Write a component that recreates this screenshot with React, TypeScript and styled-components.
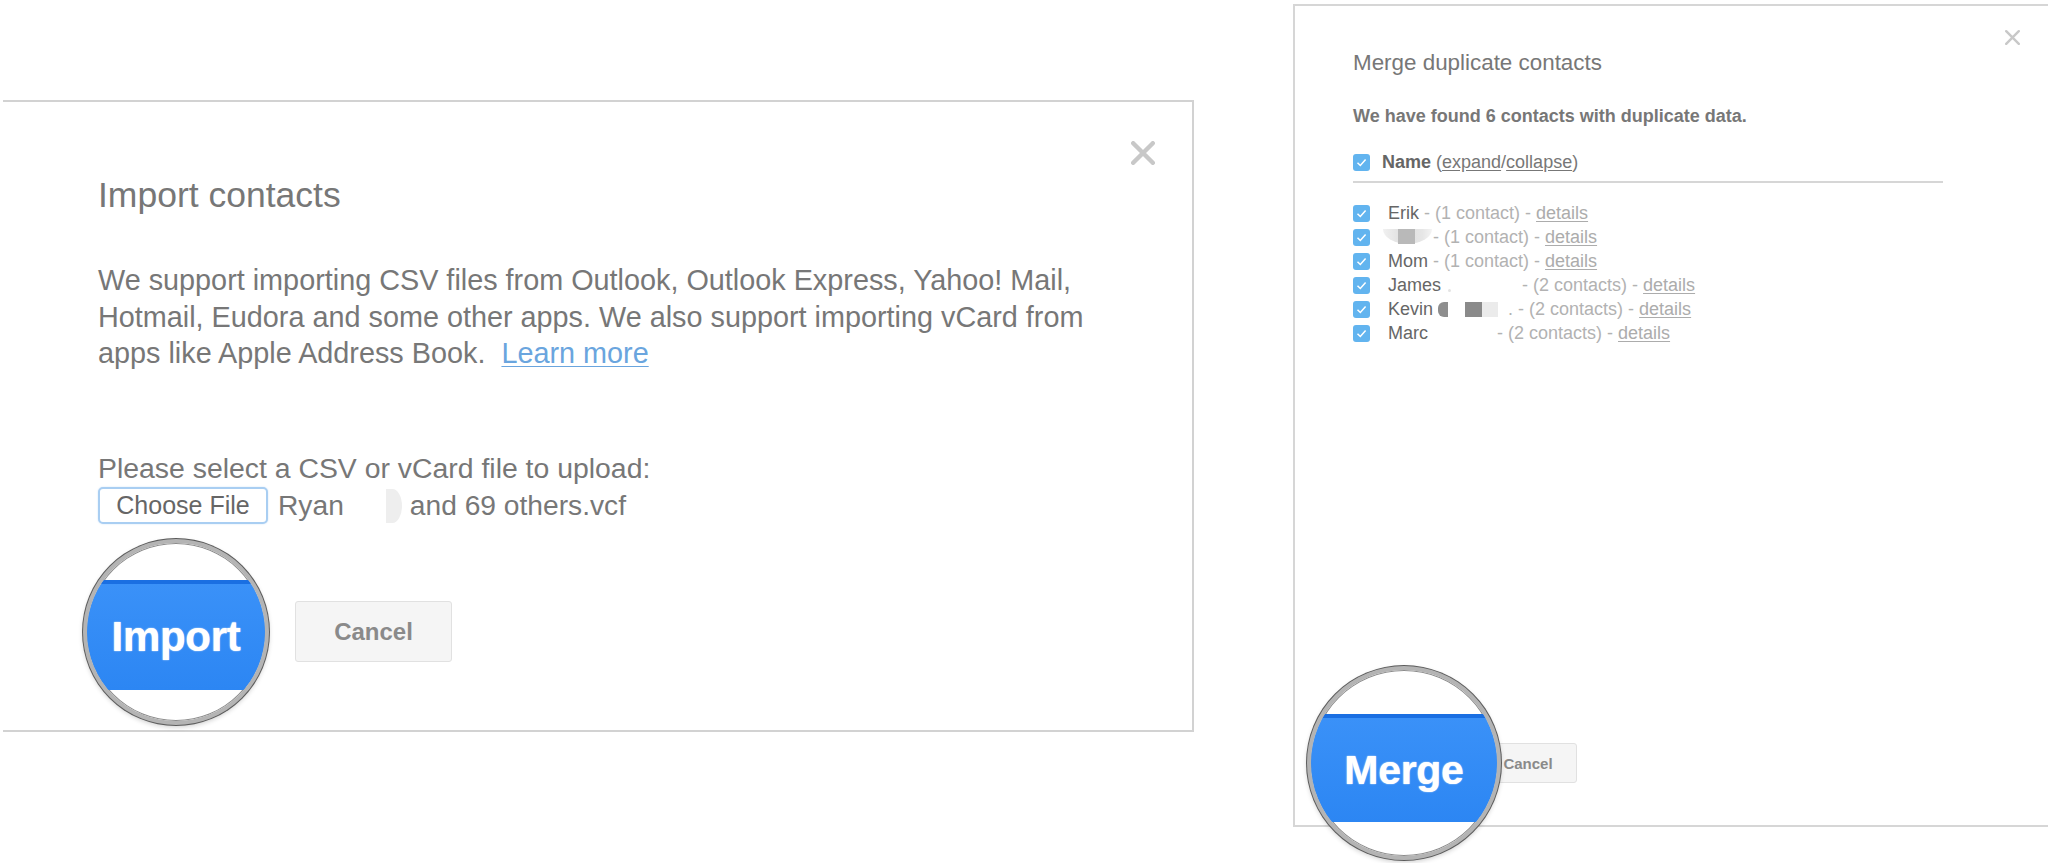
import React from "react";
import styled, { createGlobalStyle } from "styled-components";

const Global = createGlobalStyle`
  html, body { margin: 0; padding: 0; background: #ffffff; }
  body { font-family: "Liberation Sans", Arial, Helvetica, sans-serif; }
`;

const Page = styled.div`
  width: 2048px;
  height: 863px;
  overflow: hidden;
  display: flex;
  align-items: flex-start;
`;

/* ---------- shared ---------- */

const CloseButton = styled.button<{ $size: number }>`
  width: ${(p) => p.$size}px;
  height: ${(p) => p.$size}px;
  padding: 0;
  border: none;
  background: transparent;
  flex: none;
  display: block;
  svg { display: block; }
`;

const CloseIcon = ({ size, stroke }: { size: number; stroke: number }) => (
  <svg width={size} height={size} viewBox={`0 0 ${size} ${size}`}>
    <path
      d={`M${stroke / 2} ${stroke / 2} L${size - stroke / 2} ${size - stroke / 2} M${size - stroke / 2} ${stroke / 2} L${stroke / 2} ${size - stroke / 2}`}
      stroke="#c8c8c8"
      strokeWidth={stroke}
      strokeLinecap="round"
      fill="none"
    />
  </svg>
);

const HeaderRow = styled.div`
  display: flex;
  justify-content: space-between;
  align-items: flex-start;
`;

/* The primary button sits under a magnifying lens that shows it enlarged. */
const ButtonSlot = styled.div<{ $w: number; $h: number }>`
  position: relative;
  width: ${(p) => p.$w}px;
  height: ${(p) => p.$h}px;
  flex: none;
  border-radius: 3px;
  background: #4d90fe;
`;

const Lens = styled.button<{ $size: number }>`
  position: absolute;
  left: 50%;
  top: 50%;
  width: ${(p) => p.$size}px;
  height: ${(p) => p.$size}px;
  transform: translate(-50%, -50%);
  box-sizing: border-box;
  padding: 0;
  border-radius: 50%;
  border: 4px solid #b4b4b4;
  box-shadow: 0 0 0 1px #5c5c5c, inset 0 0 0 1px #8c8c8c, 0 2px 5px rgba(0, 0, 0, 0.2);
  background: #ffffff;
  overflow: hidden;
  display: flex;
  flex-direction: column;
  z-index: 2;
  font-family: inherit;
`;

const LensBand = styled.span<{ $top: number; $height: number; $font: number }>`
  margin-top: ${(p) => p.$top}px;
  width: 100%;
  height: ${(p) => p.$height}px;
  flex: none;
  box-sizing: border-box;
  background: linear-gradient(#3a91f8, #2c86f3);
  border-top: 4px solid #1a6fe2;
  display: flex;
  align-items: center;
  justify-content: center;
  color: #ffffff;
  font-weight: bold;
  font-size: ${(p) => p.$font}px;
  letter-spacing: -0.3px;
  text-shadow: 0 0 1px rgba(255, 255, 255, 0.9), 0 0 2px rgba(255, 255, 255, 0.4);
`;

const Magnifier = ({
  size,
  bandTop,
  bandHeight,
  font,
  label,
}: {
  size: number;
  bandTop: number;
  bandHeight: number;
  font: number;
  label: string;
}) => (
  <Lens $size={size}>
    <LensBand $top={bandTop} $height={bandHeight} $font={font}>
      {label}
    </LensBand>
  </Lens>
);

const CancelButton = styled.button<{ $w: number; $h: number; $font: number }>`
  width: ${(p) => p.$w}px;
  height: ${(p) => p.$h}px;
  flex: none;
  box-sizing: border-box;
  border: 1px solid #e1e1e1;
  border-radius: 3px;
  background: #f5f5f5;
  color: #8a8a8a;
  font-family: inherit;
  font-weight: bold;
  font-size: ${(p) => p.$font}px;
  padding: 0;
`;

/* ---------- import panel ---------- */

const ImportPanel = styled.section`
  box-sizing: border-box;
  margin: 100px 0 0 3px;
  width: 1191px;
  height: 632px;
  border: 2px solid #d2d2d2;
  border-left: none;
  padding: 39px 37px 0 95px;
  display: flex;
  flex-direction: column;
  color: #777777;
`;

const ImportTitle = styled.h1`
  margin: 34px 0 0 0;
  font-size: 35.5px;
  line-height: 40px;
  font-weight: normal;
  color: #777777;
`;

const BodyText = styled.p`
  margin: 47px 0 0 0;
  width: 1040px;
  font-size: 28.8px;
  line-height: 36.5px;
`;

const LearnMore = styled.a`
  color: #6aa5de;
  text-decoration: underline;
  text-decoration-thickness: 1px;
  text-underline-offset: 3px;
`;

const UploadLabel = styled.div`
  margin-top: 78px;
  font-size: 28.4px;
  line-height: 36.5px;
`;

const FileRow = styled.div`
  margin-top: 1px;
  display: flex;
  align-items: center;
  gap: 10px;
  height: 37px;
  font-size: 28.2px;
`;

const ChooseFile = styled.button`
  box-sizing: border-box;
  width: 170px;
  height: 37px;
  border: 2px solid #a9cef2;
  border-radius: 5px;
  background: #ffffff;
  box-shadow: 0 0 2px #cfe3f8;
  color: #666666;
  font-family: inherit;
  font-size: 25px;
  padding: 0;
`;

const FileName = styled.span`
  display: flex;
  align-items: center;
  color: #777777;
  white-space: pre;
`;

const FaintBlob = styled.span`
  display: inline-block;
  width: 16px;
  height: 34px;
  margin: 0 8px 0 42px;
  background: #eeeeee;
  border-radius: 0 60% 60% 0 / 0 50% 50% 0;
`;

const ImportFooter = styled.div`
  margin-top: 77px;
  display: flex;
  align-items: center;
  gap: 41px;
`;

/* ---------- merge panel ---------- */

const MergePanel = styled.section`
  box-sizing: border-box;
  margin: 4px 0 0 99px;
  width: 755px;
  height: 823px;
  border: 2px solid #d6d6d6;
  border-right: none;
  padding: 24px 28px 0 58px;
  display: flex;
  flex-direction: column;
  color: #777777;
`;

const MergeTitle = styled.h2`
  margin: 19px 0 0 0;
  font-size: 22.4px;
  line-height: 28px;
  font-weight: normal;
  color: #777777;
`;

const Summary = styled.div`
  margin-top: 27px;
  font-size: 18px;
  line-height: 24px;
  font-weight: bold;
  color: #777777;
`;

const CheckRow = styled.div<{ $gap: number }>`
  display: flex;
  align-items: center;
  height: 24px;
  gap: ${(p) => p.$gap}px;
  font-size: 18px;
  white-space: pre;
`;

const GroupRow = styled(CheckRow)`
  margin-top: 22px;
`;

const Box = styled.span`
  width: 17px;
  height: 17px;
  flex: none;
  border-radius: 3px;
  background: #62b4ef;
  display: flex;
  align-items: center;
  justify-content: center;
`;

const Checkbox = () => (
  <Box>
    <svg width="11" height="11" viewBox="0 0 11 11">
      <path d="M1.5 5.8 L4.3 8.5 L9.6 2.4" stroke="#ffffff" strokeWidth="1.5" fill="none" />
    </svg>
  </Box>
);

const GroupName = styled.span`
  font-weight: bold;
  color: #666666;
`;

const Plain = styled.span`
  color: #777777;
`;

const Underlined = styled.a`
  color: #777777;
  text-decoration: underline;
  text-underline-offset: 2px;
`;

const Separator = styled.div`
  margin-top: 7px;
  width: 590px;
  height: 2px;
  background: #d6d6d6;
`;

const List = styled.div`
  margin-top: 18px;
  display: flex;
  flex-direction: column;
`;

const ContactName = styled.span`
  color: #666666;
`;

const Muted = styled.span`
  color: #b2b2b2;
`;

const Details = styled.a`
  color: #acacac;
  text-decoration: underline;
  text-underline-offset: 2px;
`;

const Line = styled.span`
  display: flex;
  align-items: center;
`;

const Spacer = styled.span<{ $w: number }>`
  display: inline-block;
  width: ${(p) => p.$w}px;
`;

const Smudge = styled.span`
  display: inline-flex;
  width: 49px;
  height: 15px;
  margin: 0 1px 2px -5px;
  background: linear-gradient(to right, #f1f1f1, #dedede 40%, #e6e6e6 80%, #f4f4f4);
  border-radius: 0 0 50% 50% / 0 0 100% 100%;
`;

const Block = styled.span<{ $w: number; $color: string; $ml: number; $round?: boolean }>`
  display: inline-block;
  width: ${(p) => p.$w}px;
  height: 15px;
  margin-left: ${(p) => p.$ml}px;
  background: ${(p) => p.$color};
  border-radius: ${(p) => (p.$round ? "6px 0 0 6px" : "0")};
`;

const Dot = styled.span`
  display: inline-block;
  width: 3px;
  height: 3px;
  border-radius: 50%;
  background: #e4e4e4;
  margin: 10px 71px 0 7px;
`;

const MergeFooter = styled.div`
  margin-top: 398px;
  display: flex;
  align-items: center;
  gap: 24px;
`;

type Contact = { name: string; count: string; redact?: "smudge" | "james" | "kevin" | "marc" };

const contacts: Contact[] = [
  { name: "Erik", count: "1 contact" },
  { name: "", count: "1 contact", redact: "smudge" },
  { name: "Mom", count: "1 contact" },
  { name: "James", count: "2 contacts", redact: "james" },
  { name: "Kevin", count: "2 contacts", redact: "kevin" },
  { name: "Marc", count: "2 contacts", redact: "marc" },
];

const Redaction = ({ kind }: { kind?: Contact["redact"] }) => {
  if (kind === "smudge")
    return (
      <Smudge>
        <Block $w={17} $color="#b9b9b9" $ml={15} />
      </Smudge>
    );
  if (kind === "james") return <Dot />;
  if (kind === "kevin")
    return (
      <>
        <Block $w={10} $color="#8e8e8e" $ml={5} $round />
        <Block $w={17} $color="#8a8a8a" $ml={17} />
        <Block $w={16} $color="#ebebeb" $ml={0} />
        <Muted>{"  ."}</Muted>
      </>
    );
  if (kind === "marc") return <Spacer $w={64} />;
  return null;
};

const ContactRow = ({ c }: { c: Contact }) => (
  <CheckRow $gap={18}>
    <Checkbox />
    <Line>
      {c.name && <ContactName>{c.name}</ContactName>}
      <Redaction kind={c.redact} />
      <Muted>{c.redact === "smudge" || c.redact === "james" ? "- " : " - "}</Muted>
      <Muted>{`(${c.count}) - `}</Muted>
      <Details>details</Details>
    </Line>
  </CheckRow>
);

export default function App() {
  return (
    <>
      <Global />
      <Page>
        <ImportPanel>
          <HeaderRow>
            <ImportTitle>Import contacts</ImportTitle>
            <CloseButton $size={24} aria-label="Close">
              <CloseIcon size={24} stroke={4.4} />
            </CloseButton>
          </HeaderRow>
          <BodyText>
            We support importing CSV files from Outlook, Outlook Express, Yahoo! Mail, Hotmail, Eudora and
            some other apps. We also support importing vCard from apps like Apple Address Book.{"\u00a0 "}
            <LearnMore>Learn more</LearnMore>
          </BodyText>
          <UploadLabel>Please select a CSV or vCard file to upload:</UploadLabel>
          <FileRow>
            <ChooseFile>Choose File</ChooseFile>
            <FileName>
              Ryan
              <FaintBlob />
              and 69 others.vcf
            </FileName>
          </FileRow>
          <ImportFooter>
            <ButtonSlot $w={156} $h={61}>
              <Magnifier size={186} bandTop={37} bandHeight={110} font={42} label="Import" />
            </ButtonSlot>
            <CancelButton $w={157} $h={61} $font={24}>
              Cancel
            </CancelButton>
          </ImportFooter>
        </ImportPanel>

        <MergePanel>
          <HeaderRow>
            <MergeTitle>Merge duplicate contacts</MergeTitle>
            <CloseButton $size={15} aria-label="Close">
              <CloseIcon size={15} stroke={2.4} />
            </CloseButton>
          </HeaderRow>
          <Summary>We have found 6 contacts with duplicate data.</Summary>
          <GroupRow $gap={12}>
            <Checkbox />
            <span>
              <GroupName>Name</GroupName>
              <Plain> (</Plain>
              <Underlined>expand</Underlined>
              <Plain>/</Plain>
              <Underlined>collapse</Underlined>
              <Plain>)</Plain>
            </span>
          </GroupRow>
          <Separator />
          <List>
            {contacts.map((c, i) => (
              <ContactRow key={i} c={c} />
            ))}
          </List>
          <MergeFooter>
            <ButtonSlot $w={102} $h={40}>
              <Magnifier size={194} bandTop={44} bandHeight={108} font={41} label="Merge" />
            </ButtonSlot>
            <CancelButton $w={98} $h={40} $font={15}>
              Cancel
            </CancelButton>
          </MergeFooter>
        </MergePanel>
      </Page>
    </>
  );
}
